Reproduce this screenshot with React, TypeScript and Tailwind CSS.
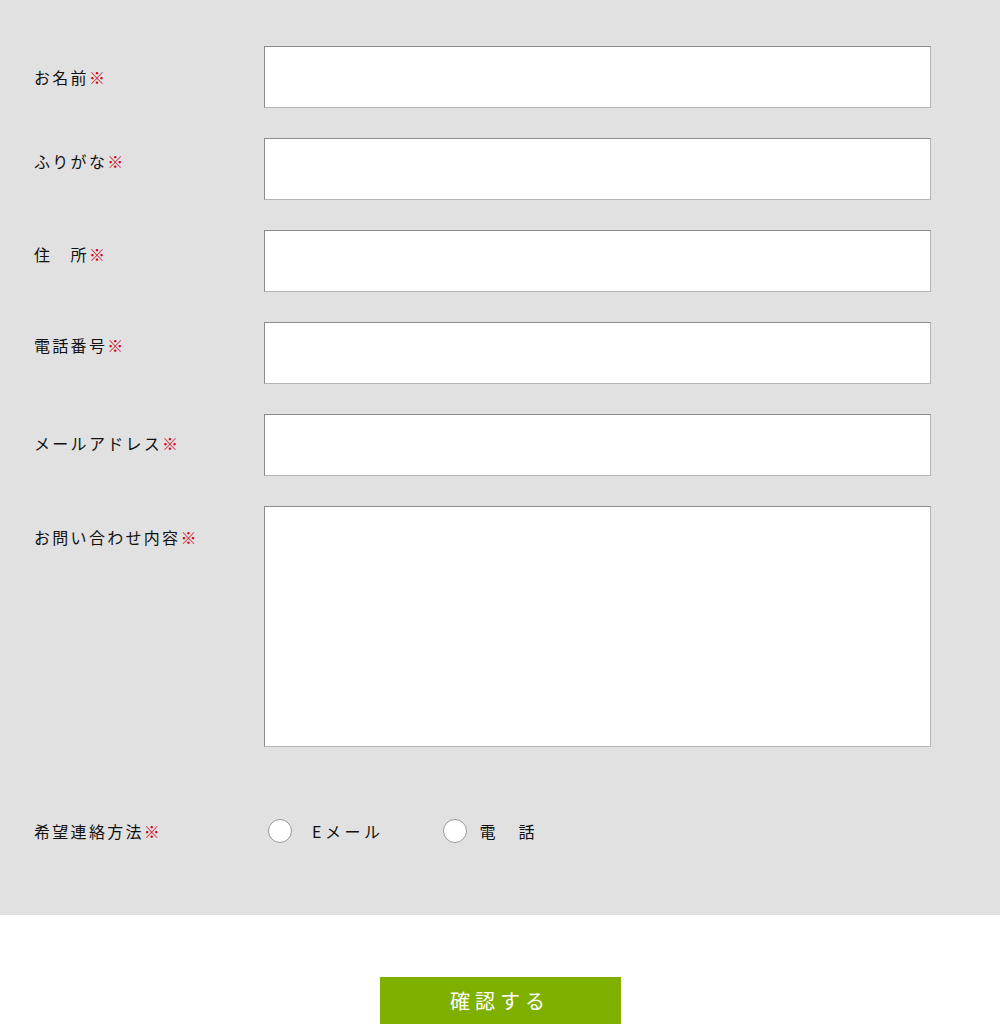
const font = { fontFamily: '"Noto Sans CJK JP", "Noto Sans", sans-serif' };

const fields = [
  { label: "お名前", pt: "pt-[22px]" },
  { label: "ふりがな", pt: "pt-[14px]" },
  { label: "住　所", pt: "pt-[15px]" },
  { label: "電話番号", pt: "pt-[14px]" },
  { label: "メールアドレス", pt: "pt-[20px]" },
];

function Req() {
  return <span className="text-[#d0021b]">※</span>;
}

function Radio({ label, gap }: { label: string; gap: string }) {
  return (
    <label className="flex items-center">
      <span className="w-6 h-6 rounded-full bg-white border border-[#999]" />
      <span className={`${gap} text-[16px] tracking-[3.5px] text-[#111]`}>{label}</span>
    </label>
  );
}

export default function App() {
  return (
    <div className="min-h-screen bg-white" style={font}>
      <div className="bg-[#e1e1e1] pl-[34px] pt-[46px] pb-[72px]">
        {fields.map((f) => (
          <div key={f.label} className="flex mb-[30px]">
            <div className={`w-[230px] ${f.pt} text-[16px] leading-[18px] tracking-[2.3px] text-[#111]`}>
              {f.label}
              <Req />
            </div>
            <input
              type="text"
              className="w-[667px] h-[62px] bg-white border border-[#b4b4b4] border-t-[#8c8c8c] border-l-[#8c8c8c] outline-none"
            />
          </div>
        ))}

        <div className="flex">
          <div className="w-[230px] pt-[22px] text-[16px] leading-[18px] tracking-[2.3px] text-[#111]">
            お問い合わせ内容
            <Req />
          </div>
          <textarea className="w-[667px] h-[241px] bg-white border border-[#b4b4b4] border-t-[#8c8c8c] border-l-[#8c8c8c] outline-none resize-none" />
        </div>

        <div className="flex items-center mt-[72px] h-6">
          <div className="w-[234px] text-[16px] leading-[18px] tracking-[2.3px] text-[#111]">
            希望連絡方法
            <Req />
          </div>
          <div className="flex items-center gap-[60px]">
            <Radio label="Eメール" gap="ml-[20px]" />
            <Radio label="電　話" gap="ml-[12px]" />
          </div>
        </div>
      </div>

      <div className="flex justify-center pt-[62px] pb-10">
        <button className="w-[241px] h-[60px] bg-[#7fb000] text-white text-[20px] tracking-[5px] flex items-center justify-center pb-3">
          確認する
        </button>
      </div>
    </div>
  );
}
